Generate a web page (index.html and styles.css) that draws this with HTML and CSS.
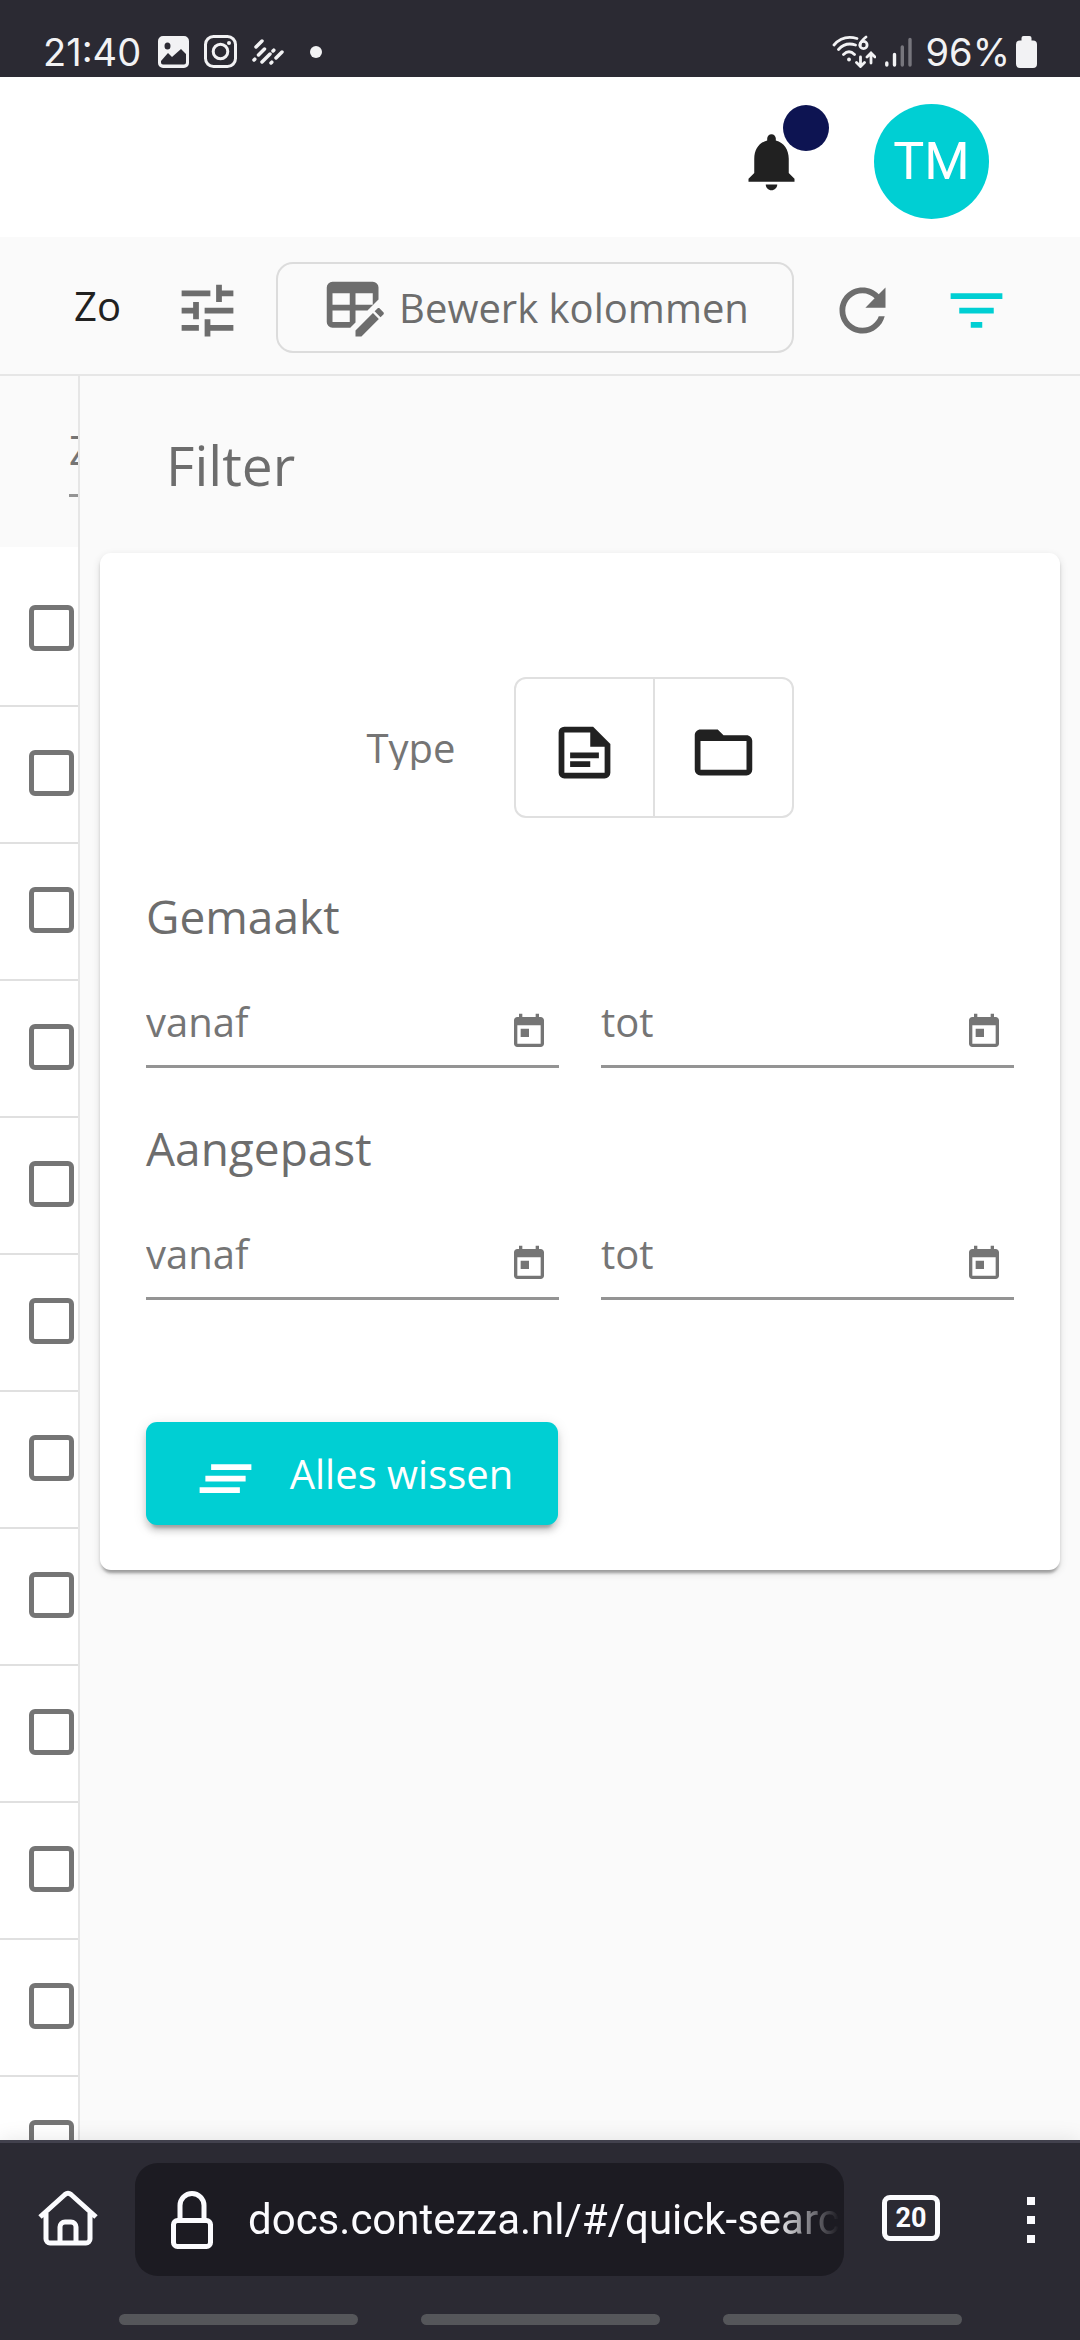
FILE: index.html
```html
<!DOCTYPE html>
<html lang="nl">
<head>
<meta charset="utf-8">
<meta name="viewport" content="width=device-width, initial-scale=1">
<title>Snel zoeken</title>
<link rel="stylesheet" href="styles.css">
</head>
<body>
<div class="screen">
  <div class="status">
    <span class="status-text">21:40</span>
    <svg class="st-image" viewBox="0 0 31 32"><path fill="#f2f2f4" fill-rule="evenodd" d="M5 0h21a5 5 0 0 1 5 5v22a5 5 0 0 1-5 5H5a5 5 0 0 1-5-5V5a5 5 0 0 1 5-5zM9.500 6.500a3 3.500 0 1 0 0 7a3 3.500 0 1 0 0-7zM3 25v1.500a2 2 0 0 0 2 2h21a2 2 0 0 0 2-2V18l-5-5-9 8-4-4z"/></svg>
    <svg class="st-insta" viewBox="0 0 33 33" fill="none" stroke="#f2f2f4"><rect x="1.500" y="1.500" width="30" height="30" rx="8" stroke-width="3"/><circle cx="16.500" cy="16.500" r="7.300" stroke-width="3"/><circle cx="25" cy="8" r="2" fill="#f2f2f4" stroke="none"/></svg>
    <svg class="st-lines" viewBox="0 0 32 26" stroke="#f2f2f4" stroke-width="3.500" stroke-linecap="round"><path d="M4 8l6-6M2 21l.8-.8M6.500 16l6-6M10 23l8-8M21 12l.8-.8M19 24l.8-.8M24 19l6-6"/></svg>
    <span class="st-dot"></span>
    <svg class="st-wifi" viewBox="0 0 44 33" fill="none" stroke="#f2f2f4" stroke-width="2.800" stroke-linecap="round"><path d="M2 10C8 3 16 1 25 3.500M6.500 14.500c5-5.500 11-6.500 17-4.500M11.500 19.500c3.500-3.500 7.500-3.500 11 0M34 2c-4 3-6 5.500-6 8.500"/><circle cx="31.500" cy="10" r="3.600"/><path d="M28.500 22v9M24.500 27.500l4 4 4-4M39 28v-9.500M35 22l4-4 4 4" /><circle cx="17" cy="24.500" r="1.900" fill="#f2f2f4" stroke="none"/></svg>
    <svg class="st-signal" viewBox="0 0 27 30" stroke="#f2f2f4" stroke-width="3.400" stroke-linecap="round"><path d="M1.800 26v2M9.500 17.500V28"/><path stroke="#77767d" d="M17.300 10v18M25 2.500V28"/></svg>
    <span class="status-text status-percent">96%</span>
    <svg class="st-battery" viewBox="0 0 21 32"><path fill="#f2f2f4" d="M5.500 2a2 2 0 0 1 2-2h6a2 2 0 0 1 2 2v2.500H17a4 4 0 0 1 4 4V28a4 4 0 0 1-4 4H4a4 4 0 0 1-4-4V8.500a4 4 0 0 1 4-4h1.500z"/></svg>
  </div>

  <header class="header">
    <button class="bell" aria-label="Meldingen">
      <svg class="icon" viewBox="0 0 24 24"><path d="M12 22c1.100 0 2-.9 2-2h-4c0 1.100.89 2 2 2zm6-6v-5c0-3.070-1.640-5.640-4.500-6.320V4c0-.83-.67-1.500-1.500-1.500s-1.500.67-1.500 1.500v.68C7.630 5.360 6 7.920 6 11v5l-2 2v1h16v-1l-2-2z"/></svg>
      <span class="badge"></span>
    </button>
    <button class="avatar">TM</button>
  </header>

  <div class="toolbar">
    <span class="crumb">Zo</span>
    <button class="tool" aria-label="Opties"><svg class="icon" viewBox="0 0 24 24"><path d="M3 17v2h6v-2H3zM3 5v2h10V5H3zm10 16v-2h8v-2h-8v-2h-2v6h2zM7 9v2H3v2h4v2h2V9H7zm14 4v-2H11v2h10zm-6-4h2V7h4V5h-4V3h-2v6z"/></svg></button>
    <button class="columns"><svg class="icon" viewBox="0 0 24 24"><path d="M21.700 13.350l-1 1-2.050-2.050 1-1c.21-.22.56-.22.77 0l1.280 1.280c.22.210.22.560 0 .770M12 18.940l6.070-6.060 2.050 2.060L14.060 21H12v-2.060M4 2h14a2 2 0 0 1 2 2v4.170L16.170 12H12v4.170L10.170 18H4a2 2 0 0 1-2-2V4a2 2 0 0 1 2-2m0 4v4h6V6H4m8 0v4h6V6h-6m-8 6v4h6v-4H4z"/></svg><span>Bewerk kolommen</span></button>
    <button class="tool" aria-label="Vernieuwen"><svg class="icon" viewBox="0 0 24 24"><path d="M17.650 6.350C16.200 4.900 14.210 4 12 4c-4.420 0-7.990 3.580-7.990 8s3.570 8 7.990 8c3.730 0 6.840-2.550 7.730-6h-2.080c-.82 2.330-3.040 4-5.650 4-3.310 0-6-2.690-6-6s2.690-6 6-6c1.660 0 3.140.69 4.220 1.780L13 11h7V4l-2.350 2.350z"/></svg></button>
    <button class="tool tool-active" aria-label="Filter"><svg class="icon" viewBox="0 0 24 24"><path d="M10 18h4v-2h-4v2zM3 6v2h18V6H3zm3 7h12v-2H6v2z"/></svg></button>
  </div>

  <main class="main">
    <section class="list" aria-label="Resultaten">
      <div class="list-head"><input class="search" type="text" placeholder="Zoeken" aria-label="Zoeken"></div>
      <ul class="rows">
        <li class="row"><input type="checkbox" aria-label="Rij 1"></li>
        <li class="row"><input type="checkbox" aria-label="Rij 2"></li>
        <li class="row"><input type="checkbox" aria-label="Rij 3"></li>
        <li class="row"><input type="checkbox" aria-label="Rij 4"></li>
        <li class="row"><input type="checkbox" aria-label="Rij 5"></li>
        <li class="row"><input type="checkbox" aria-label="Rij 6"></li>
        <li class="row"><input type="checkbox" aria-label="Rij 7"></li>
        <li class="row"><input type="checkbox" aria-label="Rij 8"></li>
        <li class="row"><input type="checkbox" aria-label="Rij 9"></li>
        <li class="row"><input type="checkbox" aria-label="Rij 10"></li>
        <li class="row"><input type="checkbox" aria-label="Rij 11"></li>
        <li class="row"><input type="checkbox" aria-label="Rij 12"></li>
      </ul>
    </section>

    <aside class="panel">
      <h1 class="panel-title">Filter</h1>
      <form class="card">
        <div class="type">
          <span class="type-label">Type</span>
          <div class="toggle">
            <button type="button" aria-label="Document"><svg class="icon" viewBox="0 0 24 24"><path fill-rule="evenodd" d="M5 3h10l6 6v10a2 2 0 0 1-2 2H5a2 2 0 0 1-2-2V5a2 2 0 0 1 2-2zM5 5v14h14v-9h-5V5zM7 12h10v2H7zM7 15h7v2H7z"/></svg></button>
            <button type="button" aria-label="Map"><svg class="icon" viewBox="0 0 24 24"><path d="M20 18H4V8h16m0-2h-8l-2-2H4c-1.110 0-2 .89-2 2v12a2 2 0 0 0 2 2h16a2 2 0 0 0 2-2V8c0-1.110-.9-2-2-2z"/></svg></button>
          </div>
        </div>

        <fieldset class="group">
          <legend>Gemaakt</legend>
          <div class="pair">
            <div class="field"><input type="text" placeholder="vanaf" aria-label="Gemaakt vanaf"><button type="button" aria-label="Kies datum"><svg class="icon" viewBox="0 0 24 24"><path d="M19 3h-1V1h-2v2H8V1H6v2H5c-1.110 0-1.990.9-1.990 2L3 19c0 1.100.89 2 2 2h14c1.100 0 2-.9 2-2V5c0-1.100-.9-2-2-2zm0 16H5V8h14v11zM7 10h5v5H7z"/></svg></button></div>
            <div class="field"><input type="text" placeholder="tot" aria-label="Gemaakt tot"><button type="button" aria-label="Kies datum"><svg class="icon" viewBox="0 0 24 24"><path d="M19 3h-1V1h-2v2H8V1H6v2H5c-1.110 0-1.990.9-1.990 2L3 19c0 1.100.89 2 2 2h14c1.100 0 2-.9 2-2V5c0-1.100-.9-2-2-2zm0 16H5V8h14v11zM7 10h5v5H7z"/></svg></button></div>
          </div>
        </fieldset>

        <fieldset class="group">
          <legend>Aangepast</legend>
          <div class="pair">
            <div class="field"><input type="text" placeholder="vanaf" aria-label="Aangepast vanaf"><button type="button" aria-label="Kies datum"><svg class="icon" viewBox="0 0 24 24"><path d="M19 3h-1V1h-2v2H8V1H6v2H5c-1.110 0-1.990.9-1.990 2L3 19c0 1.100.89 2 2 2h14c1.100 0 2-.9 2-2V5c0-1.100-.9-2-2-2zm0 16H5V8h14v11zM7 10h5v5H7z"/></svg></button></div>
            <div class="field"><input type="text" placeholder="tot" aria-label="Aangepast tot"><button type="button" aria-label="Kies datum"><svg class="icon" viewBox="0 0 24 24"><path d="M19 3h-1V1h-2v2H8V1H6v2H5c-1.110 0-1.990.9-1.990 2L3 19c0 1.100.89 2 2 2h14c1.100 0 2-.9 2-2V5c0-1.100-.9-2-2-2zm0 16H5V8h14v11zM7 10h5v5H7z"/></svg></button></div>
          </div>
        </fieldset>

        <button class="clear" type="reset"><svg class="icon" viewBox="0 0 24 24"><path d="M5 13h14v-2H5v2zm-2 4h14v-2H3v2zM7 7v2h14V7H7z"/></svg><span>Alles wissen</span></button>
      </form>
    </aside>
  </main>

  <footer class="browser">
    <div class="browser-row">
      <button class="home" aria-label="Startpagina"><svg viewBox="0 0 60 56" fill="none" stroke="#fbfbfe" stroke-width="5" stroke-linejoin="round"><path d="M2 27L27 4.500q3-2.500 6 0L58 27M8 23v26a4 4 0 0 0 4 4h36a4 4 0 0 0 4-4V23M22 53V37a5 5 0 0 1 5-5h6a5 5 0 0 1 5 5v16"/></svg></button>
      <div class="url">
        <svg class="lock" viewBox="0 0 42 58" fill="none" stroke="#fbfbfe" stroke-width="5"><rect x="2.500" y="29.500" width="37" height="26" rx="4"/><path d="M9 29V14.500a12 12 0 0 1 24 0V29"/></svg>
        <span class="address">docs.contezza.nl/#/quick-search</span>
      </div>
      <button class="tabs" aria-label="Tabbladen">20</button>
      <button class="menu" aria-label="Menu"><span></span><span></span><span></span></button>
    </div>
    <div class="handles"><span></span><span></span><span></span></div>
  </footer>
</div>
</body>
</html>
```
FILE: styles.css
```css
* { box-sizing: border-box; }

body {
  margin: 0;
  font-family: "Open Sans", "Noto Sans", sans-serif;
  font-size: 40px;
  color: #6d6d6d;
  background: #fafafa;
}

button {
  display: flex;
  align-items: center;
  justify-content: center;
  padding: 0;
  border: 0;
  background: none;
  font: inherit;
  color: inherit;
}

svg { display: block; flex: none; }

.icon { width: 69px; height: 69px; fill: currentColor; }

.screen {
  display: flex;
  flex-direction: column;
  height: 100vh;
  overflow: hidden;
}

/* Phone status bar */
.status {
  display: flex;
  align-items: center;
  flex: none;
  height: 77px;
  padding: 26px 43px 0;
  background: #2b2a33;
  color: #f2f2f4;
}
.status-text { font: 38px/48px Inter, sans-serif; }
.st-image { width: 31px; height: 32px; margin-left: 17px; }
.st-insta { width: 33px; height: 33px; margin-left: 15px; }
.st-lines { width: 32px; height: 26px; margin-left: 15px; }
.st-dot {
  width: 12px;
  height: 12px;
  margin: 0 auto 0 26px;
  border-radius: 50%;
  background: #f2f2f4;
}
.st-wifi { width: 44px; height: 33px; }
.st-signal { width: 27px; height: 30px; margin-left: 9px; }
.status-percent { margin-left: 14px; }
.st-battery { width: 21px; height: 32px; margin-left: 6px; }

/* App header */
.header {
  display: flex;
  align-items: center;
  justify-content: flex-end;
  gap: 68px;
  flex: none;
  height: 160px;
  padding: 8px 91px 0 0;
  background: #fff;
}
.bell { position: relative; color: #212121; }
.badge {
  position: absolute;
  left: 46px;
  top: -22px;
  width: 46px;
  height: 46px;
  border-radius: 50%;
  background: #0d1452;
}
.avatar {
  width: 115px;
  height: 115px;
  border-radius: 50%;
  background: #00cfd3;
  color: #fff;
  font-family: Roboto, sans-serif;
  font-size: 52px;
}

/* Toolbar */
.toolbar {
  display: flex;
  align-items: center;
  flex: none;
  height: 139px;
  padding: 4px 69px 0 74px;
  border-bottom: 2px solid #e6e6e6;
}
.crumb { width: 99px; padding-bottom: 4px; color: #212121; }
.tool { padding-top: 6px; }
.tool-active { margin-left: 45px; color: #00cfd3; }
.columns {
  flex: 1;
  gap: 9px;
  height: 91px;
  margin: 0 34px;
  border: 2px solid #dcdcdc;
  border-radius: 17px;
  white-space: nowrap;
}
.columns .icon { margin-top: 6px; }

/* Result list, covered by the filter panel */
.main {
  display: flex;
  flex: 1;
  min-height: 0;
  overflow: hidden;
}
.list {
  flex: none;
  width: 80px;
  overflow: hidden;
  border-right: 2px solid #e6e6e6;
  background: #fff;
}
.list-head {
  height: 171px;
  padding: 42px 0 0 69px;
  background: #fafafa;
}
.search {
  width: 320px;
  height: 79px;
  padding: 0 0 13px;
  border: 0;
  border-bottom: 3px solid #949494;
  background: none;
  font: inherit;
}
input::placeholder { color: #757575; opacity: 1; }
.rows { margin: 0; padding: 0; list-style: none; }
.row {
  height: 137px;
  padding: 43px 0 0 29px;
  border-bottom: 2px solid #e0e0e0;
}
.row:first-child { height: 160px; padding-top: 58px; }
.row input {
  display: block;
  appearance: none;
  width: 45px;
  height: 46px;
  margin: 0;
  border: 5px solid #757575;
  border-radius: 6px;
}

/* Filter panel */
.panel { flex: 1; min-width: 0; padding: 0 20px; }
.panel-title {
  margin: 0;
  padding-left: 66px;
  font-size: 55px;
  font-weight: 400;
  line-height: 177px;
}
.card {
  padding: 124px 46px 45px;
  border-radius: 11px;
  background: #fff;
  box-shadow: 0 6px 3px -3px rgba(0, 0, 0, .2), 0 3px 3px rgba(0, 0, 0, .14), 0 3px 9px rgba(0, 0, 0, .12);
}
.type {
  display: flex;
  align-items: center;
  justify-content: center;
  gap: 58px;
  margin-bottom: 67px;
}
.type-label { overflow: hidden; color: #757575; line-height: 45px; }
.toggle {
  display: flex;
  height: 141px;
  border: 2px solid #e0e0e0;
  border-radius: 12px;
  color: #212121;
}
.toggle button { width: 137px; height: 137px; padding-top: 10px; }
.toggle button + button { width: 139px; border-left: 2px solid #e0e0e0; }

.group { min-width: 0; margin: 0 0 49px; padding: 0; border: 0; }
.group legend {
  padding: 0;
  margin-bottom: 43px;
  font-size: 46px;
  line-height: 62px;
}
.pair {
  display: grid;
  grid-template-columns: repeat(2, minmax(0, 1fr));
  gap: 42px;
}
.field {
  display: flex;
  align-items: flex-end;
  padding: 0 10px 13px 0;
  border-bottom: 3px solid #949494;
}
.field input {
  flex: 1;
  min-width: 0;
  height: 62px;
  padding: 0;
  border: 0;
  background: none;
  font: inherit;
}
.field .icon { width: 40px; height: 40px; fill: #757575; }

.clear {
  gap: 30px;
  width: 412px;
  height: 103px;
  margin-top: 122px;
  border-radius: 11px;
  background: #00cfd3;
  color: #fff;
  box-shadow: 0 9px 3px -6px rgba(0, 0, 0, .2), 0 6px 6px rgba(0, 0, 0, .14), 0 3px 14px rgba(0, 0, 0, .12);
}
.clear .icon { margin-top: 10px; }

/* Browser bar */
.browser {
  position: relative;
  flex: none;
  padding: 20px 0 15px;
  border-top: 3px solid #42414d;
  background: #2b2a33;
  color: #fbfbfe;
  box-shadow: 0 0 20px rgba(0, 0, 0, .1);
}
.browser-row { display: flex; align-items: center; padding: 0 45px 0 38px; }
.home { margin-right: 37px; padding-bottom: 4px; }
.home svg { width: 60px; height: 56px; }
.url {
  display: flex;
  align-items: center;
  flex: 1;
  min-width: 0;
  gap: 35px;
  height: 113px;
  padding: 0 5px 0 36px;
  border-radius: 23px;
  background: #1c1b22;
}
.lock { width: 42px; height: 58px; }
.address {
  flex: 1;
  min-width: 0;
  overflow: hidden;
  font: 42px/60px Roboto, sans-serif;
  white-space: nowrap;
  -webkit-mask-image: linear-gradient(to right, #000 calc(100% - 66px), transparent);
  mask-image: linear-gradient(to right, #000 calc(100% - 66px), transparent);
}
.tabs {
  width: 58px;
  height: 46px;
  margin: 0 87px 3px 38px;
  border: 5px solid #fbfbfe;
  border-radius: 8px;
  font: 700 27px/30px Roboto, sans-serif;
}
.menu { flex-direction: column; gap: 11px; }
.menu span { width: 8px; height: 8px; background: #fbfbfe; }
.handles {
  display: flex;
  justify-content: center;
  gap: 63px;
  margin-top: 38px;
}
.handles span { width: 239px; height: 11px; border-radius: 6px; background: #55565a; }
```
